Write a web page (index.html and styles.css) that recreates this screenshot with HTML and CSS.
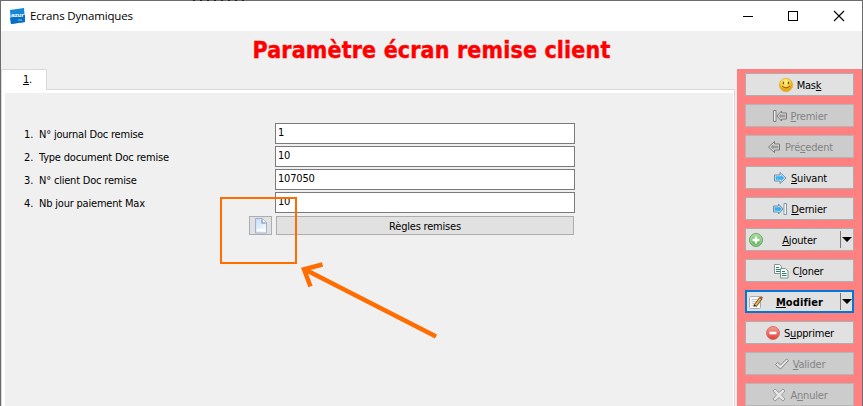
FILE: index.html
```
<!DOCTYPE html>
<html lang="fr">
<head>
<meta charset="utf-8">
<title>Ecrans Dynamiques</title>
<link rel="stylesheet" href="styles.css">
</head>
<body>
<div class="backdrop"></div>
<div class="window">
  <header class="titlebar">
    <svg class="app-icon" width="17" height="17" viewBox="0 0 17 17"><path d="M1 2 15 0 16 14 2 16Z" fill="#1787d8"/><path d="M1 10 16 7V14L2 16Z" fill="#0870c4"/><text x="2" y="9" class="logo-text">azur</text><path d="M9 12h4" stroke="#8cc7ef"/></svg>
    <span class="caption">Ecrans Dynamiques</span>
    <svg class="controls" width="106" height="14" viewBox="0 0 106 14"><g fill="none" stroke="#000" shape-rendering="crispEdges"><path d="M2 7.5h10"/><rect x="47.5" y="2.5" width="9" height="9"/></g><path d="M93 2l10 10M103 2l-10 10" stroke="#000" stroke-width="1.1"/></svg>
  </header>
  <h1 class="heading">Paramètre écran remise client</h1>
  <main class="workspace">
    <section class="tabs">
      <div class="tab"><span><u>1</u>.</span></div>
      <div class="page"><div class="page-inner">
        <label class="row"><span class="num">1.</span><span class="name">N° journal Doc remise</span><span class="field">1</span></label>
        <label class="row"><span class="num">2.</span><span class="name">Type document Doc remise</span><span class="field">10</span></label>
        <label class="row"><span class="num">3.</span><span class="name">N° client Doc remise</span><span class="field">107050</span></label>
        <label class="row"><span class="num">4.</span><span class="name">Nb jour paiement Max</span><span class="field">10</span></label>
        <div class="actions">
          <button class="doc"><svg width="14" height="17" viewBox="0 0 14 17"><defs><linearGradient id="d" x2="1" y2="1"><stop stop-color="#bfdcf8"/><stop offset="1" stop-color="#fff"/></linearGradient></defs><path d="M1.500 1.500h7l4 4v10.500h-11z" fill="url(#d)" stroke="#a3add8"/><path d="M3 13h8" stroke="#fff" stroke-width="2"/><path d="M7.500 2v4.500H12z" fill="#6f83a6"/><path d="M8.500 1.500l4 4h-4z" fill="#f8fbff" stroke="#a3b3d0" stroke-width=".6"/></svg></button>
          <button class="rules">Règles remises</button>
        </div>
      </div></div>
    </section>
    <aside class="side">
      <button class="btn"><svg width="16" height="16" viewBox="0 0 16 16"><defs><radialGradient id="y" cx=".45" cy=".3"><stop stop-color="#fff59a"/><stop offset=".65" stop-color="#fcd23c"/><stop offset="1" stop-color="#e8a91d"/></radialGradient></defs><circle cx="8" cy="8" r="6.700" fill="url(#y)" stroke="#e0ab35" stroke-width=".6"/><path d="M5.500 4.800v2.400M10.500 4.800v2.400" stroke="#6b4a0c" stroke-width="1.300"/><path d="M4 9q4 3.800 8 0" fill="none" stroke="#8a5c10"/></svg><span>Mas<u>k</u></span></button>
      <button class="btn off"><svg width="16" height="16" viewBox="0 0 16 16"><path d="M1.500 2.500h2.500v11h-2.500z" fill="#f0f0f0" stroke="#808080"/><path d="M5 8 9.500 3v2h5v6h-5v2z" fill="#e4e4e4" stroke="#777"/><path d="M6.500 8 9 5.500v1h4.500v3H9v1z" fill="#999"/></svg><span><u>P</u>remier</span></button>
      <button class="btn off"><svg width="16" height="16" viewBox="0 0 16 16"><path d="M2.500 8 8.500 2.500v2.500h5v6h-5v2.500z" fill="#e4e4e4" stroke="#777"/><path d="M4.300 8 7.500 5v1.500h5v3h-5V11z" fill="#9c9c9c"/></svg><span>Pré<u>c</u>edent</span></button>
      <button class="btn"><svg width="16" height="16" viewBox="0 0 16 16"><path d="M14 8 8 2.500v2.500H2.500v6H8v2.500z" fill="#c8ecff" stroke="#718d9f"/><path d="M12.300 8 9 5v1.200H3.700v3.600H9V11z" fill="#42aff0"/></svg><span><u>S</u>uivant</span></button>
      <button class="btn"><svg width="16" height="16" viewBox="0 0 16 16"><path d="M12 2.500h2.500v11H12z" fill="#fff" stroke="#7896ac"/><path d="M11 8 6.500 3v2h-5v6h5v2z" fill="#c0e9ff" stroke="#718d9f"/><path d="M9.800 8 7.300 5.300v1H2.500v3.400h4.800v1z" fill="#39acee"/></svg><span><u>D</u>ernier</span></button>
      <button class="btn split"><svg width="16" height="16" viewBox="0 0 16 16"><defs><linearGradient id="g" x2="0" y2="1"><stop stop-color="#a5dda0"/><stop offset="1" stop-color="#4faa47"/></linearGradient></defs><circle cx="8" cy="8" r="6.500" fill="url(#g)" stroke="#66a85f"/><circle cx="8" cy="8" r="5.300" fill="none" stroke="#b7e3b0" stroke-width=".7"/><path d="M8 4.500v7M4.500 8h7" stroke="#fff" stroke-width="2.300"/></svg><span><u>A</u>jouter</span><i class="drop"></i></button>
      <button class="btn clone"><svg width="16" height="16" viewBox="0 0 16 16"><g stroke="#84928e" fill="#f8fffd"><path d="M1.500 1.500h5l2 2v7h-7z"/><path d="M7.500 5.500h5l2.500 2.500v7h-7.500z"/></g><path d="M3 4.500h3M3 6.500h4M3 8.500h4M9 8.500h3M9 10.500h4.500M9 12.500h4.500" stroke="#2c8070"/></svg><span>C<u>l</u>oner</span></button>
      <button class="btn split focus"><svg width="16" height="16" viewBox="0 0 16 16"><rect x="1.500" y="2.500" width="11" height="12" rx="1" fill="#fafafa" stroke="#a9adb2"/><path d="M3.500 5.500h6M3.500 7.500h5M3.500 9.500h3M3.500 11.500h3" stroke="#ccc"/><path d="M7 12 13 4" stroke="#6a4a22" stroke-width="3.600"/><path d="M7.500 11.300 13 4" stroke="#e7b453" stroke-width="2"/><path d="M12.300 5 14 2.800" stroke="#a9563d" stroke-width="2.500"/><path d="m5.500 13 .5-2.500 2 1.500z" fill="#333"/></svg><span><u>M</u>odifier</span><i class="drop"></i></button>
      <button class="btn"><svg width="16" height="16" viewBox="0 0 16 16"><defs><linearGradient id="r" x2="0" y2="1"><stop stop-color="#f4a197"/><stop offset="1" stop-color="#df3d35"/></linearGradient></defs><circle cx="8" cy="8" r="6.500" fill="url(#r)" stroke="#d86e68"/><path d="M4.500 8h7" stroke="#fff" stroke-width="2.600"/></svg><span>S<u>u</u>pprimer</span></button>
      <button class="btn off"><svg width="16" height="16" viewBox="0 0 16 16"><path d="m1.500 8.500 2-2 3 2.500L12.500 3l2 1.500L6.500 13z" fill="#e5e5e5" stroke="#858585"/></svg><span><u>V</u>alider</span></button>
      <button class="btn off"><svg width="16" height="16" viewBox="0 0 16 16"><path d="m2 4 2-2 4 3.500L12 2l2 2-3.500 4 3.500 4-2 2-4-3.500L4 14l-2-2 3.500-4z" fill="#e5e5e5" stroke="#999"/></svg><span>A<u>n</u>nuler</span></button>
    </aside>
  </main>
</div>
<div class="mark"></div>
<svg class="arrow" width="146" height="86" viewBox="0 0 146 86"><path d="M143 75.500 12 8.500M29.500 3.500 11 8.200 17.500 25.500" /></svg>
</body>
</html>
```
FILE: styles.css
```
* { box-sizing: border-box; }
body {
  margin: 0;
  width: 863px;
  height: 406px;
  overflow: hidden;
  background: #f0f0f0;
  color: #000;
  font: 11px/14px "DejaVu Sans Condensed", "DejaVu Sans", sans-serif;
  font-stretch: condensed;
  letter-spacing: -.2px;
}
u { text-decoration: underline; text-underline-offset: 1px; text-decoration-thickness: 1px; text-decoration-skip-ink: none; }
.backdrop {
  height: 1px;
  background: repeating-linear-gradient(90deg, #222 0 2px, #6c6a6d 2px 7px) 193px 0 / 54px 1px no-repeat #6c6a6d;
}
.window {
  height: 405px;
  border-left: 1px solid #6b6b6b;
  border-right: 1px solid #6b6b6b;
  display: flex;
  flex-direction: column;
}
.titlebar { height: 30px; flex: none; background: #fff; display: flex; align-items: center; padding: 0 15px 0 8px; }
.app-icon { margin-right: 4px; }
.logo-text { font: bold 5.5px "DejaVu Sans", sans-serif; fill: #e8f6ff; letter-spacing: -.2px; }
.caption { font: 11.5px/16px "Open Sans", sans-serif; letter-spacing: -.17px; flex: 1; }
.heading {
  margin: 0;
  height: 38px;
  flex: none;
  font-size: 23px;
  line-height: 38px;
  font-weight: bold;
  color: #f00;
  text-align: center;
  letter-spacing: .15px;
  -webkit-text-stroke: .4px #f00;
}
.workspace { flex: 1; display: flex; min-height: 0; }
.tabs { width: 734px; display: flex; flex-direction: column; }
.tab {
  width: 46px;
  height: 21px;
  margin-bottom: -1px;
  background: #fff;
  border: 1px solid #d9d9d9;
  border-bottom: 0;
  padding: 3px 0 0 21px;
  position: relative;
}
.page { flex: 1; border: 1px solid #d9d9d9; border-bottom: 0; background: #fff; padding: 3px 1px 0 3px; }
.page-inner { height: 100%; background: #f0f0f0; padding: 30px 0 0 19px; }
.row { display: flex; height: 21px; margin-bottom: 2px; align-items: center; }
.num { width: 15px; letter-spacing: 0; padding-top: 2px; }
.name { width: 236px; padding-top: 2px; }
.field { width: 300px; height: 21px; background: #fff; border: 1px solid #7a7a7a; padding: 2px 0 0 2px; }
.actions { display: flex; margin-top: 3px; padding-left: 225px; gap: 4px; }
button { font: inherit; letter-spacing: inherit; color: inherit; background: #e1e1e1; border: 1px solid #adadad; border-radius: 0; padding: 0; display: flex; align-items: center; justify-content: center; }
.doc { width: 23px; height: 19px; }
.doc svg { margin-left: 1px; }
.rules { width: 298px; height: 19px; padding-top: 2px; }
.side { width: 125px; margin-left: 2px; background: #ff8080; padding: 4px 8px 0; display: flex; flex-direction: column; gap: 8px; }
.btn { width: 109px; height: 23px; flex: none; gap: 3px; padding-top: 2px; }
.btn svg { margin-top: -2px; }
.clone svg { margin: -2px 1px 0 -3px; }
.off { background: #ccc; border-color: #b5b5b5; color: #838383; }
.split { justify-content: flex-start; padding-left: 2px; gap: 0; }
.split span { flex: 1; text-align: center; padding-right: 5px; }
.drop { width: 13px; height: 17px; margin-top: -2px; border-left: 1px solid #777; display: flex; align-items: center; padding-left: 1px; }
.drop::before { content: ""; border: 5px solid transparent; border-top: 5px solid #000; border-bottom: 0; }
.focus { border: 2px solid #0078d7; padding-left: 1px; font-weight: bold; letter-spacing: .1px; }
.focus .drop { margin-right: -1px; }
.mark { position: absolute; left: 220px; top: 197px; width: 77px; height: 67px; border: 2px solid #ff6c00; }
.arrow { position: absolute; left: 293px; top: 261px; fill: none; stroke: #ff6c00; stroke-width: 4.5; }
```
